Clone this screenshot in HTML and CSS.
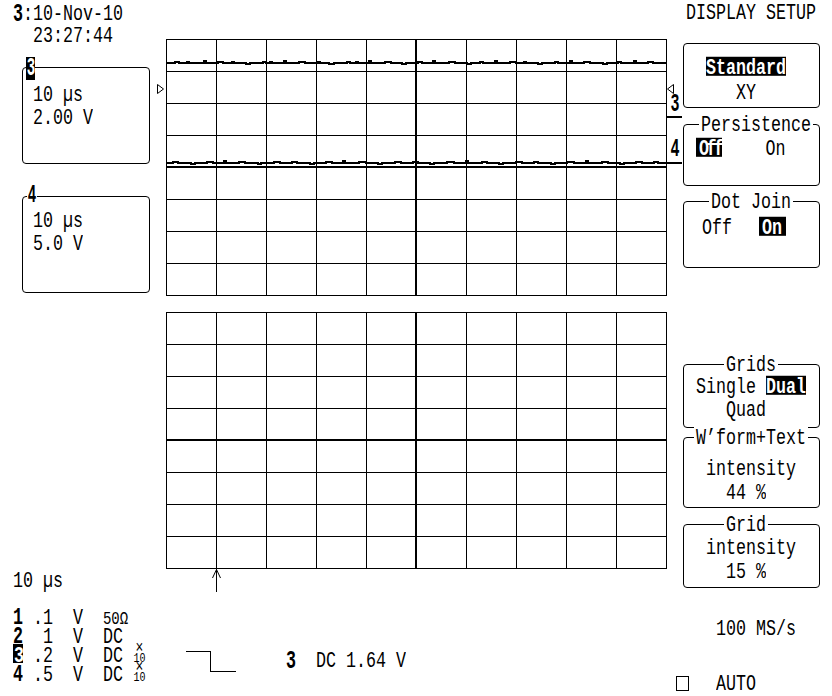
FILE: index.html
```html
<!DOCTYPE html>
<html>

<head>
    <meta charset="utf-8">
    <title>DISPLAY SETUP</title>
    <link rel="stylesheet" href="styles.css">
</head>

<body>
    <div class="screen">

        <div class="left">
            <div class="ln"><b class="ch">3</b>:10-Nov-10</div>
            <div class="ln gap2">  23:27:44</div>

            <div class="trace-box box3">
                <span class="tag tag-inv"><b class="ch">3</b></span>
                <div class="ln">10 µs</div>
                <div class="ln gap3">2.00 V</div>
            </div>

            <div class="trace-box box4">
                <span class="tag"><b class="ch">4</b></span>
                <div class="ln">10 µs</div>
                <div class="ln gap3">5.0 V</div>
            </div>

            <div class="foot">
                <div class="ln">10 µs</div>
                <div class="legend">
                    <div class="ln"><b class="ch">1</b> .1  V  <span class="sm">50Ω</span></div>
                    <div class="ln"><b class="ch">2</b>  1  V  DC</div>
                    <div class="ln"><b class="boxed">3</b> .2  V  DC <span class="x10"><span class="x">×</span><span class="ten">10</span></span></div>
                    <div class="ln"><b class="ch">4</b> .5  V  DC <span class="x10"><span class="x">×</span><span class="ten">10</span></span></div>
                </div>
            </div>
        </div>

        <div class="scope">
            <svg class="grid" viewBox="0 0 501 257">
                <path class="gl" d="M0.5 0V257M50.5 0V257M100.5 0V257M150.5 0V257M200.5 0V257M300.5 0V257M350.5 0V257M400.5 0V257M450.5 0V257M500.5 0V257M0 0.5H501M0 32.5H501M0 64.5H501M0 96.5H501M0 160.5H501M0 192.5H501M0 224.5H501M0 256.5H501" />
                <path class="gc" d="M250 0V257M0 128H501" />
                <path class="tr" d="M0 24H9V23H13V24H21V23H23V24H38V22H40V24H52V23H57V24H66V23H68V24H80V25H84V24H97V23H100V24H104V23H106V24H118V22H120V24H133V23H139V24H152V23H154V24H163V25H168V24H181V23H184V24H190V23H192V24H203V22H205V24H219V23H225V24H236V25H240V24H252V23H256V24H267V22H269V24H283V23H289V24H301V25H305V24H314V23H317V24H329V22H331V24H344V23H350V24H358V23H360V24H372V25H376V24H389V23H392V24H404V22H406V24H418V23H424V24H437V25H441V24H452V23H455V24H468V22H470V24H482V23H487V24H501" />
                <path class="tr" d="M0 124H7V123H12V124H25V125H29V124H41V123H47V124H58V122H60V124H73V123H79V124H92V125H95V124H108V123H114V124H126V123H131V124H144V125H148V124H160V123H166V124H177V122H179V124H193V123H200V124H212V125H216V124H229V123H235V124H247V123H252V124H264V125H268V124H281V123H288V124H300V122H302V124H316V123H321V124H333V125H337V124H350V123H356V124H368V123H372V124H385V125H389V124H401V123H408V124H420V122H422V124H436V123H442V124H454V125H458V124H470V123H476V124H488V123H492V124H501" />
            </svg>
            <svg class="grid" viewBox="0 0 501 257">
                <path class="gl" d="M0.5 0V257M50.5 0V257M100.5 0V257M150.5 0V257M200.5 0V257M300.5 0V257M350.5 0V257M400.5 0V257M450.5 0V257M500.5 0V257M0 0.5H501M0 32.5H501M0 64.5H501M0 96.5H501M0 160.5H501M0 192.5H501M0 224.5H501M0 256.5H501" />
                <path class="gc" d="M250 0V257M0 128H501" />
            </svg>
            <svg class="trig-arrow" width="11" height="23" viewBox="0 0 11 23">
                <path d="M5.5 0V23M5.5 0.5L1.5 9M5.5 0.5L9.5 9" />
            </svg>
            <div class="trig">
                <svg class="step" width="50" height="23" viewBox="0 0 50 23">
                    <path d="M0 1.5H24.5V21.5H50" />
                </svg>
                <div class="ln"><b class="ch">3</b>  DC 1.64 V</div>
            </div>

            <svg class="mark mark-l" width="8" height="11" viewBox="0 0 8 11">
                <path d="M0.5 0.5L6.5 5L0.5 9.5Z" />
            </svg>
            <svg class="mark mark-r" width="8" height="11" viewBox="0 0 8 11">
                <path d="M6.5 0.5L0.5 5L6.5 9.5Z" />
            </svg>
            <div class="lvl lvl3"><b class="ch">3</b></div>
            <div class="lvl lvl4"><b class="ch">4</b></div>
        </div>

        <div class="side">
            <div class="ln pl3">DISPLAY SETUP</div>

            <div class="mb mb1">
                <div class="ln">  <span class="inv">Standard</span></div>
                <div class="ln m5">     XY</div>
            </div>

            <div class="mb mb2">
                <div class="ln ttl h5"> <span class="tt">Persistence</span></div>
                <div class="ln m4"> <span class="inv tight">Off</span>    On</div>
            </div>

            <div class="mb mb3">
                <div class="ln ttl h5">  <span class="tt">Dot Join</span></div>
                <div class="ln m6 h-1"> Off  <span class="inv pad">On</span></div>
            </div>

            <div class="mb mb4">
                <div class="ln ttl">    <span class="tt">Grids</span></div>
                <div class="ln m2"> Single <span class="inv">Dual</span></div>
                <div class="ln m3">    Quad</div>
            </div>

            <div class="mb mb5">
                <div class="ln ttl"> <span class="tt">W’form+Text</span></div>
                <div class="ln m11">  intensity</div>
                <div class="ln m4">    44 %</div>
            </div>

            <div class="mb mb6">
                <div class="ln ttl">    <span class="tt">Grid</span></div>
                <div class="ln m3">  intensity</div>
                <div class="ln m4">    15 %</div>
            </div>

            <div class="ln pl3 rate">   100 MS/s</div>

            <div class="auto">
                <span class="sq"></span>
                <div class="ln">AUTO</div>
            </div>
        </div>

    </div>
</body>

</html>
```

FILE: styles.css
```css
* {
    margin: 0;
    padding: 0;
    box-sizing: border-box;
}

html,
body {
    width: 832px;
    height: 696px;
    overflow: hidden;
    background-color: white;
}

body {
    color: black;
    font-family: "Liberation Mono", "DejaVu Sans Mono", monospace;
    font-size: 16.667px;
    line-height: 20px;
}

.screen {
    display: grid;
    grid-template-columns: 166px 501px 165px;
    height: 696px;
}

/* the scope font is tall and narrow: stretch every text line */
.ln {
    height: 20px;
    white-space: pre;
    transform: scaleY(1.36);
}

.ch {
    display: inline-block;
    font-weight: bold;
    transform: scaleY(1.12);
}

.inv,
.boxed {
    display: inline-block;
    height: 14px;
    line-height: 17.6px;
    background-color: black;
    color: white;
    font-weight: bold;
}

.boxed {
    width: 10px;
    padding-left: 1px;
}

.tight {
    letter-spacing: -2.5px;
    padding-left: 3px;
    margin-right: 4px;
}

.pad {
    padding: 0 4px 0 3px;
    margin-left: 7px;
}

.gap2 { margin-top: 2px; }
.gap3 { margin-top: 3px; }
.m2 { margin-top: 2px; }
.m3 { margin-top: 3px; }
.m4 { margin-top: 4px; }
.m5 { margin-top: 5px; }
.m6 { margin-top: 6px; }
.m11 { margin-top: 11px; }

/* left column */
.left {
    display: flex;
    flex-direction: column;
    padding: 5px 0 12px 13px;
}

.trace-box {
    position: relative;
    flex: none;
    width: 128px;
    height: 97px;
    margin-left: 9px;
    padding-left: 10px;
    border: 1px solid black;
    border-radius: 4px;
}

.box3 {
    margin-top: 20px;
    padding-top: 18px;
}

.box4 {
    margin-top: 32px;
    padding-top: 15px;
}

.tag {
    position: absolute;
    left: 4px;
    top: -13px;
    width: 10px;
    height: 24px;
    display: flex;
    justify-content: center;
    line-height: 24px;
    background-color: white;
}

.tag .ch {
    transform: scale(0.85, 1.5);
}

.tag-inv {
    left: 3px;
    top: -11px;
    width: 9px;
    height: 23px;
    line-height: 23px;
    background-color: black;
    color: white;
}

.foot {
    margin-top: auto;
}

.legend {
    margin-top: 16px;
}

.legend .ln {
    height: 19px;
}

.legend .ch {
    transform: scaleY(1.05);
}

.sm {
    font-size: 14px;
}

/* probe x10 mark, stacked */
.x10 {
    display: inline-flex;
    flex-direction: column;
    align-items: center;
    vertical-align: top;
    margin-top: 2px;
    width: 13px;
}

.x10 .x {
    height: 6px;
    font-size: 13px;
    line-height: 6px;
}

.x10 .ten {
    height: 6px;
    font-size: 10px;
    line-height: 7px;
}

/* scope grids */
.scope {
    position: relative;
    padding-top: 39px;
}

.grid {
    display: block;
    width: 501px;
    height: 257px;
    shape-rendering: crispEdges;
}

.grid + .grid {
    margin-top: 16px;
}

.gl,
.gc,
.tr,
.trig-arrow path,
.step path {
    fill: none;
    stroke: black;
}

.gl { stroke-width: 1; }
.gc { stroke-width: 2; }
.tr { stroke-width: 2; }

.trig-arrow {
    display: block;
    margin-left: 45px;
}

.trig {
    display: flex;
    margin-top: 58px;
    margin-left: 20px;
}

.step {
    display: block;
    flex: none;
    shape-rendering: crispEdges;
}

.trig .ln {
    margin-left: 50px;
    margin-top: 2px;
}

.mark {
    position: absolute;
    top: 84px;
}

.mark path {
    fill: white;
    stroke: black;
    stroke-width: 1;
}

.mark-l { left: -9px; }
.mark-r { left: 501px; }

.lvl {
    position: absolute;
    left: 501px;
    width: 15px;
    padding-top: 1px;
    text-align: center;
    border-bottom: 2px solid black;
}

.lvl .ch {
    transform: scale(0.9, 1.5);
}

.lvl3 {
    top: 94px;
    height: 24px;
}

.lvl4 {
    top: 139px;
    height: 25px;
}

/* right menu */
.side {
    display: flex;
    flex-direction: column;
    padding: 4px 0 0 16px;
}

.pl3 {
    padding-left: 3px;
}

.mb {
    flex: none;
    width: 137px;
    padding-left: 2px;
    border: 1px solid black;
    border-radius: 4px;
}

.mb1 {
    margin-top: 19px;
    height: 65px;
    padding-top: 15px;
}

.mb2 {
    margin-top: 16px;
    height: 62px;
}

.mb3 {
    margin-top: 15px;
    height: 67px;
}

.mb4 {
    margin-top: 96px;
    height: 64px;
}

.mb5 {
    margin-top: 9px;
    height: 71px;
}

.mb6 {
    margin-top: 16px;
    height: 64px;
}

.ttl {
    margin-top: -9px;
}

.ttl.h5 {
    padding-left: 5px;
}

.h-1 {
    padding-left: 6px;
}

.tt {
    background-color: white;
    padding: 0 2px;
    margin: 0 -2px;
}

.rate {
    margin-top: 32px;
}

.auto {
    display: flex;
    margin-top: 34px;
    margin-left: -7px;
}

.sq {
    flex: none;
    width: 13px;
    height: 15px;
    margin-top: 2px;
    border: 1px solid black;
}

.auto .ln {
    margin-left: 27px;
    height: 18px;
}
```
